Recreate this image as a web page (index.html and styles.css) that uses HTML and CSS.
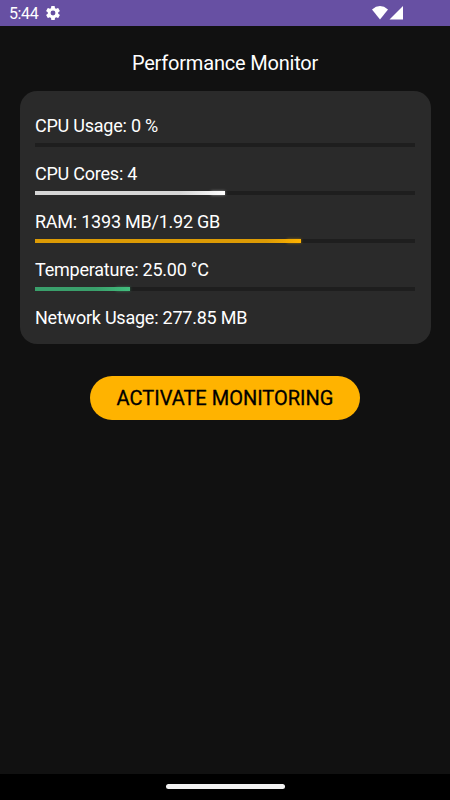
FILE: index.html
```html
<!DOCTYPE html>
<html lang="en">
<head>
    <meta charset="UTF-8">
    <title>Performance Monitor</title>
    <link rel="stylesheet" href="styles.css">
</head>
<body>
<div class="screen">
    <header class="status-bar">
        <span class="clock">5:44</span>
        <svg class="gear" viewBox="2 2 20 20" width="14" height="14"><path fill="#fff" fill-rule="evenodd" d="M19.4 13a7.500 7.500 0 0 0 0-2l2.100-1.650a.5.5 0 0 0 .12-.64l-2-3.460a.5.5 0 0 0-.6-.22l-2.500 1a7.300 7.300 0 0 0-1.700-.98l-.38-2.650A.5.5 0 0 0 14 2h-4a.5.5 0 0 0-.5.4l-.37 2.650a7.700 7.700 0 0 0-1.700.98l-2.480-1a.5.5 0 0 0-.6.22l-2 3.460a.5.5 0 0 0 .12.64L4.600 11a8 8 0 0 0 0 2l-2.130 1.650a.5.5 0 0 0-.12.640l2 3.460a.5.5 0 0 0 .6.22l2.500-1a7.300 7.300 0 0 0 1.700.98l.36 2.650a.5.5 0 0 0 .5.4h4a.5.5 0 0 0 .5-.4l.37-2.650a7.700 7.700 0 0 0 1.700-.98l2.480 1a.5.5 0 0 0 .6-.22l2-3.460a.5.5 0 0 0-.12-.64zM12 15.500a3.500 3.500 0 1 1 0-7 3.500 3.500 0 0 1 0 7z"/></svg>
        <svg class="signals" viewBox="0 0 32 14" width="32" height="14">
            <path fill="#fff" d="M0 3.400Q8 -3.400 16 3.400L8 13.500z"/>
            <path fill="#fff" d="M31 0v13.500H17.500z"/>
        </svg>
    </header>
    <main class="content">
        <h1>Performance Monitor</h1>
        <section class="card">
            <div class="stat">
                <p>CPU Usage: 0 %</p>
                <div class="track"></div>
            </div>
            <div class="stat">
                <p>CPU Cores: 4</p>
                <div class="track"><div class="bar white" style="width: 50%"></div></div>
            </div>
            <div class="stat">
                <p>RAM: 1393 MB/1.92 GB</p>
                <div class="track"><div class="bar orange" style="width: 70%"></div></div>
            </div>
            <div class="stat">
                <p>Temperature: 25.00 °C</p>
                <div class="track"><div class="bar green" style="width: 25%"></div></div>
            </div>
            <div class="stat">
                <p>Network Usage: 277.85 MB</p>
            </div>
        </section>
        <button class="activate">ACTIVATE MONITORING</button>
    </main>
    <footer class="nav-bar"><div class="handle"></div></footer>
</div>
</body>
</html>
```
FILE: styles.css
```css
body {
    margin: 0;
    background: #111;
    color: #fff;
    font-family: Roboto, "Liberation Sans", sans-serif;
}
.screen {
    display: flex;
    flex-direction: column;
    height: 800px;
}
.status-bar {
    display: flex;
    align-items: center;
    box-sizing: border-box;
    height: 26px;
    padding: 0 46px 0 9px;
    background: #6750a3;
}
.clock {
    width: 37px;
    font-size: 16px;
    line-height: 26px;
    letter-spacing: -0.4px;
    padding-top: 2px;
}
.signals {
    margin-left: auto;
}
.content {
    display: flex;
    flex: 1;
    flex-direction: column;
    align-items: center;
}
h1 {
    margin: 25px 0 16px;
    font-size: 20px;
    font-weight: 400;
    line-height: 24px;
    letter-spacing: -0.2px;
}
.card {
    box-sizing: border-box;
    width: 411px;
    height: 253px;
    padding: 23px 15.5px 0;
    border-radius: 17px;
    background: #2a2a2a;
}
.stat {
    height: 48px;
}
.stat p {
    margin: 0;
    font-size: 18px;
    line-height: 24px;
    letter-spacing: -0.23px;
}
.track {
    height: 4px;
    margin-top: 5px;
    background: #1e1e1e;
}
.bar {
    position: relative;
    height: 4px;
}
/* soft glow at the leading end */
.bar::after {
    content: "";
    position: absolute;
    top: 0;
    right: 0;
    width: 14px;
    height: 4px;
    box-shadow: 0 0 3px;
    opacity: 0.5;
}
.white {
    background: linear-gradient(to right, #d6d6d6 calc(100% - 45px), #fff);
    color: #fff;
}
.orange {
    background: linear-gradient(to right, #dc9b05 calc(100% - 35px), #ffb300);
    color: #ffb300;
}
.green {
    background: linear-gradient(to right, #3a9f6b calc(100% - 35px), #42bf7e);
    color: #42bf7e;
}
.activate {
    width: 270px;
    height: 44px;
    margin-top: 31.5px;
    padding: 0;
    border: 0;
    border-radius: 22px;
    background: #ffb300;
    color: #000;
    font-family: inherit;
    font-size: 20px;
    font-weight: 400;
    -webkit-text-stroke: 0.3px #000;
}
.nav-bar {
    display: flex;
    justify-content: center;
    height: 26px;
    background: #000;
}
.handle {
    width: 119px;
    height: 5px;
    margin-top: 10px;
    border-radius: 3px;
    background: #f2f2f2;
}
```
